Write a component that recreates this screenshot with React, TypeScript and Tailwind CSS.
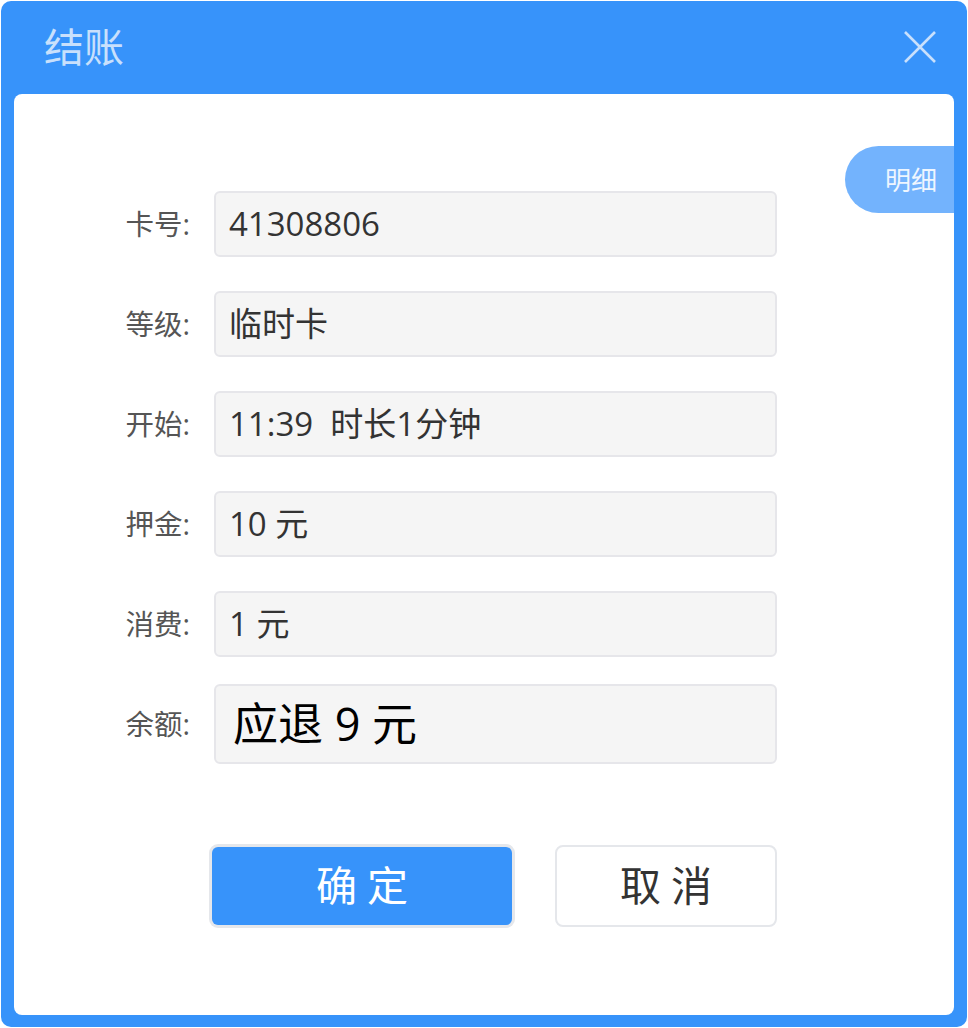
const ROWS = [
  { label: "卡号:", value: "41308806" },
  { label: "等级:", value: "临时卡" },
  { label: "开始:", value: "11:39  时长1分钟" },
  { label: "押金:", value: "10 元" },
  { label: "消费:", value: "1 元" },
];

const FONT = "font-['Segoe_UI','Open_Sans','Noto_Sans_CJK_SC',sans-serif]";

export default function App() {
  return (
    <div className={`w-[968px] h-[1028px] bg-white p-[1px] ${FONT}`}>
      <div className="h-[1026px] w-[966px] bg-[#3793fa] rounded-[10px] flex flex-col">
        {/* header */}
        <div className="h-[93px] flex items-center justify-between pl-[43px] pr-[30px] pb-[2px]">
          <span className="text-[40px] leading-none text-[#c8e0fc]">结账</span>
          <svg width="34" height="34" viewBox="0 0 34 34" className="text-[#c8e0fc]">
            <path d="M2 2 L32 32 M32 2 L2 32" stroke="currentColor" strokeWidth="2.6" />
          </svg>
        </div>

        {/* body */}
        <div className="relative flex-1 mx-[13px] mb-[12px] bg-white rounded-[8px] pt-[97px]">
          <div className="absolute right-0 top-[52px] w-[109px] h-[67px] rounded-l-[34px] bg-[#73b3fd] flex items-center pl-[40px]">
            <span className="text-[26px] text-[#eef6ff] leading-none">明细</span>
          </div>

          <div className="flex flex-col gap-[34px]">
            {ROWS.map((r) => (
              <div key={r.label} className="flex items-center">
                <div className="w-[176px] text-right text-[28.5px] text-[#555]">{r.label}</div>
                <div className="ml-[24px] w-[563px] h-[66px] rounded-[6px] border-2 border-[#e6e6ea] bg-[#f5f5f5] flex items-center pl-[13px] text-[33px] text-[#333] whitespace-pre">
                  {r.value}
                </div>
              </div>
            ))}
          </div>

          <div className="flex items-center mt-[27px]">
            <div className="w-[176px] text-right text-[28.5px] text-[#555]">余额:</div>
            <div className="ml-[24px] w-[563px] h-[80px] rounded-[6px] border-2 border-[#e6e6ea] bg-[#f5f5f5] flex items-center pl-[17px] text-[45px] text-black whitespace-pre">
              应退 9 元
            </div>
          </div>

          <div className="flex mt-[80px] ml-[195px] gap-[40px]">
            <div className="w-[306px] h-[84px] rounded-[9px] bg-[#e5e7eb] p-[3px]">
              <div className="w-full h-full rounded-[6px] bg-[#3793fa] flex items-center justify-center text-[41px] text-white tracking-[10px] pl-[10px]">
                确定
              </div>
            </div>
            <div className="w-[222px] h-[82px] mt-[1px] rounded-[8px] border-2 border-[#e5e7eb] bg-white flex items-center justify-center text-[41px] text-[#333] tracking-[10px] pl-[10px]">
              取消
            </div>
          </div>
        </div>
      </div>
    </div>
  );
}
